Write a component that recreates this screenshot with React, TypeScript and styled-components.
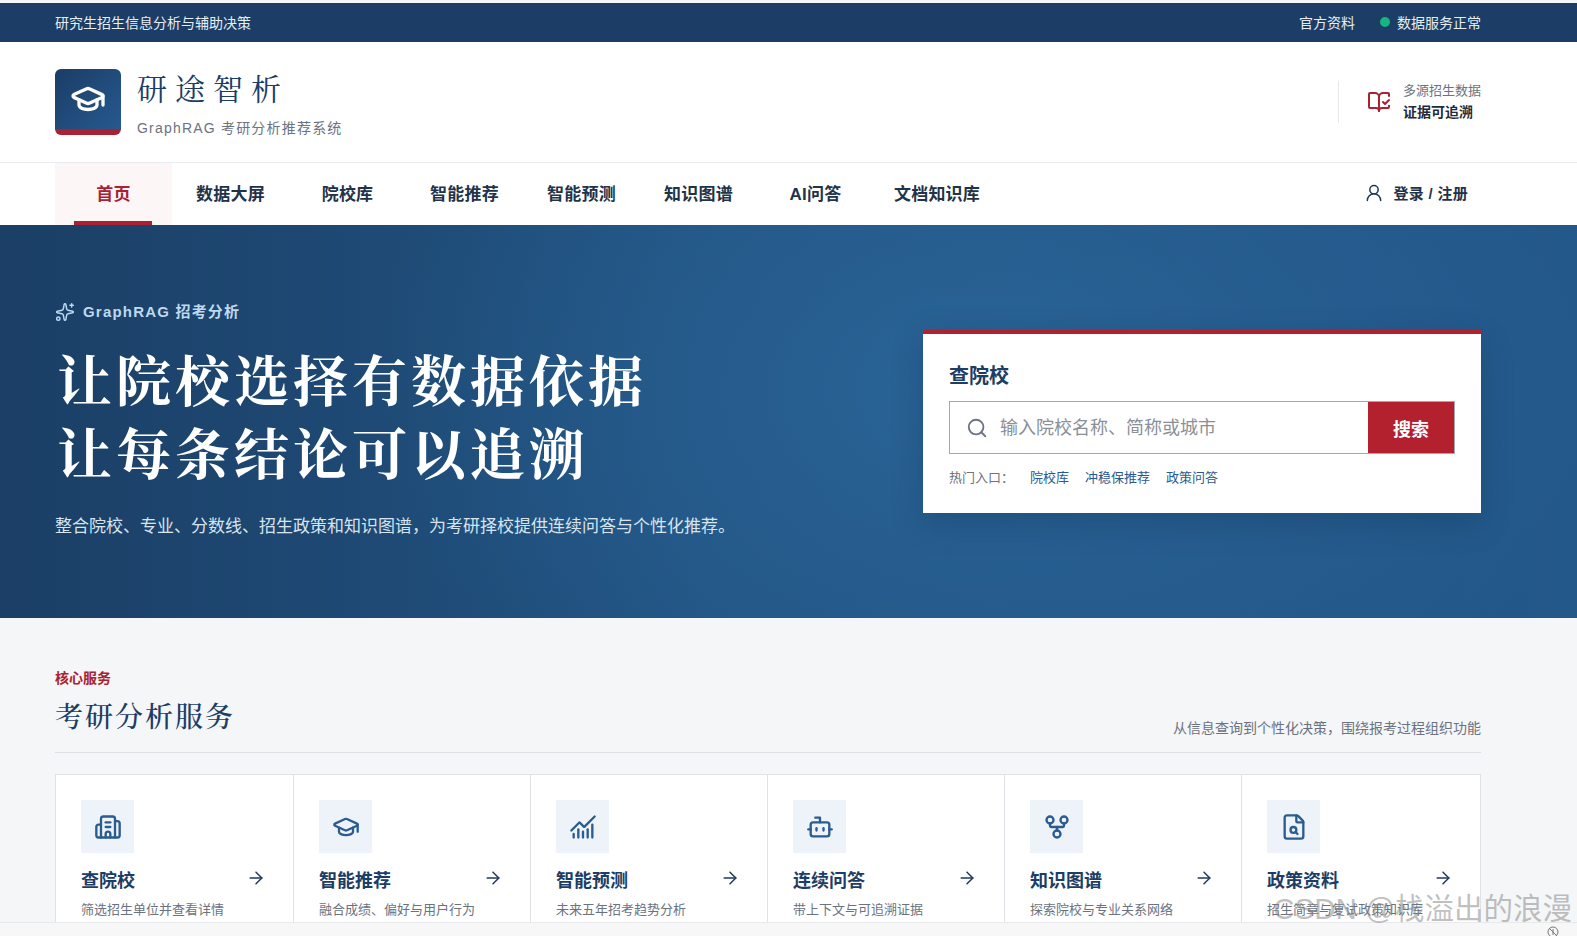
import React from 'react';
import styled, { createGlobalStyle } from 'styled-components';
import {
  ArrowRight,
  BookOpenCheck,
  Bot,
  Building2,
  ChartNoAxesCombined,
  FileSearch,
  GitFork,
  GraduationCap,
  Search,
  Sparkles,
  UserRound,
} from 'lucide-react';

const sans = '"Liberation Sans", "Noto Sans CJK SC", sans-serif';
const serif = '"Noto Serif CJK SC", "Liberation Serif", "Noto Sans CJK SC", serif';

const GlobalStyle = createGlobalStyle`
  html, body {
    margin: 0;
    padding: 0;
    height: 100%;
    overflow: hidden;
    background: #f7f7f7;
    font-family: ${sans};
  }
  * {
    box-sizing: border-box;
  }
`;

const NAV_ITEMS = ['首页', '数据大屏', '院校库', '智能推荐', '智能预测', '知识图谱', 'AI问答', '文档知识库'];

const SERVICES = [
  { icon: Building2, title: '查院校', desc: '筛选招生单位并查看详情' },
  { icon: GraduationCap, title: '智能推荐', desc: '融合成绩、偏好与用户行为' },
  { icon: ChartNoAxesCombined, title: '智能预测', desc: '未来五年招考趋势分析' },
  { icon: Bot, title: '连续问答', desc: '带上下文与可追溯证据' },
  { icon: GitFork, title: '知识图谱', desc: '探索院校与专业关系网络' },
  { icon: FileSearch, title: '政策资料', desc: '招生简章与复试政策知识库' },
];

const App = (): JSX.Element => {
  return (
    <Page>
      <GlobalStyle />
      <Viewport>
        <TopBar>
          <span>研究生招生信息分析与辅助决策</span>
          <TopBarRight>
            <span>官方资料</span>
            <Status>
              <StatusDot />
              数据服务正常
            </Status>
          </TopBarRight>
        </TopBar>

        <Header>
          <Brand>
            <LogoMark>
              <GraduationCap size={36} color="#fff" strokeWidth={2.2} />
            </LogoMark>
            <BrandText>
              <BrandName>研途智析</BrandName>
              <BrandSub>GraphRAG 考研分析推荐系统</BrandSub>
            </BrandText>
          </Brand>
          <HeaderNote>
            <BookOpenCheck size={24} color="#a92233" strokeWidth={2} />
            <NoteText>
              <NoteLight>多源招生数据</NoteLight>
              <NoteBold>证据可追溯</NoteBold>
            </NoteText>
          </HeaderNote>
        </Header>

        <Nav>
          <NavList>
            {NAV_ITEMS.map((item, i) => (
              <NavItem key={item} $active={i === 0}>
                {item}
              </NavItem>
            ))}
          </NavList>
          <Login>
            <LoginIcon size={20} color="#1f3a56" strokeWidth={1.8} />
            登录 / 注册
          </Login>
        </Nav>

        <Hero>
          <HeroCopy>
            <Eyebrow>
              <Sparkles size={20} color="#bcd9f0" strokeWidth={1.8} />
              GraphRAG 招考分析
            </Eyebrow>
            <Headline>
              让院校选择有数据依据
              <br />
              让每条结论可以追溯
            </Headline>
            <HeroText>整合院校、专业、分数线、招生政策和知识图谱，为考研择校提供连续问答与个性化推荐。</HeroText>
          </HeroCopy>
          <SearchCard>
            <SearchTitle>查院校</SearchTitle>
            <SearchRow>
              <SearchField>
                <Search size={22} color="#6b7484" strokeWidth={2} />
                <SearchInput placeholder="输入院校名称、简称或城市" />
              </SearchField>
              <SearchButton>搜索</SearchButton>
            </SearchRow>
            <HotLinks>
              <HotLabel>热门入口：</HotLabel>
              <HotLink>院校库</HotLink>
              <HotLink>冲稳保推荐</HotLink>
              <HotLink>政策问答</HotLink>
            </HotLinks>
          </SearchCard>
        </Hero>

        <Services>
          <Kicker>核心服务</Kicker>
          <SectionHead>
            <SectionTitle>考研分析服务</SectionTitle>
            <SectionNote>从信息查询到个性化决策，围绕报考过程组织功能</SectionNote>
          </SectionHead>
          <CardGrid>
            {SERVICES.map(({ icon: Icon, title, desc }) => (
              <ServiceCard key={title}>
                <IconBox>
                  <Icon size={28} color="#2a5c8f" strokeWidth={2} />
                </IconBox>
                <CardTitleRow>
                  <CardTitle>{title}</CardTitle>
                  <CardArrow size={20} color="#1f3a5c" strokeWidth={1.8} />
                </CardTitleRow>
                <CardDesc>{desc}</CardDesc>
              </ServiceCard>
            ))}
          </CardGrid>
        </Services>
      </Viewport>
      <BottomBand />
      <Watermark>CSDN @栈溢出的浪漫</Watermark>
      <CornerMark viewBox="0 0 14 14" fill="none" stroke="#777" strokeWidth="1">
        <circle cx="7" cy="7" r="5" />
        <path d="M3 3l8 8M7 4v6" />
      </CornerMark>
    </Page>
  );
};

export default App;

const Page = styled.div`
  position: relative;
  width: 1577px;
  height: 936px;
  display: flex;
  flex-direction: column;
  overflow: hidden;
  background: #f7f7f7;
`;

const Viewport = styled.div`
  flex: 1;
  min-height: 0;
  overflow: hidden;
  padding-top: 3px;
  background: #f4f6f8;
`;

const TopBar = styled.div`
  height: 39px;
  padding: 0 96px 2px 55px;
  display: flex;
  align-items: center;
  justify-content: space-between;
  background: #1b3d66;
  color: #e6edf5;
  font-size: 14px;
`;

const TopBarRight = styled.div`
  display: flex;
  align-items: center;
  gap: 25px;
`;

const Status = styled.span`
  display: flex;
  align-items: center;
  gap: 7px;
`;

const StatusDot = styled.i`
  width: 10px;
  height: 10px;
  border-radius: 50%;
  background: #17b57f;
`;

const Header = styled.header`
  height: 121px;
  padding: 0 96px 0 55px;
  display: flex;
  align-items: center;
  justify-content: space-between;
  background: #fff;
  border-bottom: 1px solid #e9ebee;
`;

const Brand = styled.div`
  display: flex;
  align-items: center;
  gap: 16px;
`;

const LogoMark = styled.div`
  width: 66px;
  height: 66px;
  display: flex;
  align-items: center;
  justify-content: center;
  border-radius: 6px;
  border-bottom: 6px solid #a92233;
  background: linear-gradient(135deg, #1b3d66, #26598f);
`;

const BrandText = styled.div`
  display: flex;
  flex-direction: column;
  gap: 13px;
`;

const BrandName = styled.div`
  font-family: ${serif};
  font-size: 30px;
  line-height: 38px;
  font-weight: 400;
  letter-spacing: 8px;
  color: #1b3d66;
`;

const BrandSub = styled.div`
  font-size: 14px;
  line-height: 18px;
  letter-spacing: 1.2px;
  color: #6b7280;
`;

const HeaderNote = styled.div`
  height: 42px;
  padding-left: 28px;
  display: flex;
  align-items: center;
  gap: 12px;
  border-left: 1px solid #e6e8eb;
`;

const NoteText = styled.div`
  display: flex;
  flex-direction: column;
  gap: 2px;
  margin-top: -1px;
`;

const NoteLight = styled.span`
  font-size: 13px;
  line-height: 18px;
  color: #6b7280;
`;

const NoteBold = styled.span`
  font-size: 14px;
  line-height: 20px;
  font-weight: 700;
  color: #1f2d3d;
`;

const Nav = styled.nav`
  height: 62px;
  padding: 0 109px 0 55px;
  display: flex;
  align-items: stretch;
  justify-content: space-between;
  background: #fff;
`;

const NavList = styled.div`
  display: flex;
  align-items: stretch;
`;

const NavItem = styled.a<{ $active?: boolean }>`
  position: relative;
  min-width: 117px;
  padding: 0 20px 4px;
  display: flex;
  align-items: center;
  justify-content: center;
  font-size: 17px;
  font-weight: 700;
  letter-spacing: 0.2px;
  color: ${({ $active }) => ($active ? '#a92233' : '#1f3349')};
  background: ${({ $active }) => ($active ? '#fdf6f6' : 'transparent')};

  &::after {
    content: '';
    display: ${({ $active }) => ($active ? 'block' : 'none')};
    position: absolute;
    left: 19px;
    right: 20px;
    bottom: 0;
    height: 4px;
    background: #a92233;
  }
`;

const Login = styled.a`
  padding-bottom: 4px;
  display: flex;
  align-items: center;
  gap: 9px;
  font-size: 15px;
  font-weight: 700;
  letter-spacing: 0.3px;
  color: #1f3349;
`;

const LoginIcon = styled(UserRound)`
  margin-top: 2px;
`;

const Hero = styled.section`
  height: 393px;
  padding: 0 96px 0 55px;
  display: flex;
  align-items: center;
  justify-content: space-between;
  background:
    radial-gradient(ellipse 620px 420px at 62% 42%, rgba(48, 112, 165, 0.55), transparent 100%),
    linear-gradient(90deg, #1b3f66 0%, #215382 45%, #23588a 100%);
`;

const HeroCopy = styled.div`
  display: flex;
  flex-direction: column;
  margin-top: -1px;
`;

const Eyebrow = styled.div`
  display: flex;
  align-items: center;
  gap: 8px;
  font-size: 15px;
  line-height: 20px;
  font-weight: 700;
  letter-spacing: 1.2px;
  color: #bcd9f0;
`;

const Headline = styled.h1`
  margin: 19px 0 0 2px;
  font-family: ${serif};
  font-size: 55px;
  line-height: 73px;
  font-weight: 700;
  letter-spacing: 4px;
  color: #fff;
`;

const HeroText = styled.p`
  margin: 27px 0 0;
  font-size: 17px;
  line-height: 26px;
  color: #d7e4ef;
`;

const SearchCard = styled.div`
  width: 558px;
  height: 183px;
  padding: 28px 26px 0;
  background: #fff;
  border-top: 4px solid #b3212f;
  box-shadow: 0 10px 30px rgba(10, 30, 60, 0.22);
`;

const SearchTitle = styled.div`
  font-size: 20px;
  line-height: 28px;
  font-weight: 700;
  color: #1b3d66;
`;

const SearchRow = styled.div`
  margin-top: 11px;
  height: 53px;
  display: flex;
  border: 1px solid #a3a8b0;
`;

const SearchField = styled.div`
  flex: 1;
  padding-left: 16px;
  display: flex;
  align-items: center;
  gap: 10px;
`;

const SearchInput = styled.input`
  flex: 1;
  padding-top: 3px;
  border: 0;
  outline: 0;
  font-family: ${sans};
  font-size: 18px;
  color: #1f2d3d;

  &::placeholder {
    color: #8a8f98;
    opacity: 1;
  }
`;

const SearchButton = styled.button`
  width: 86px;
  border: 0;
  background: #b3212f;
  color: #fff;
  font-family: ${sans};
  font-size: 18px;
  font-weight: 700;
`;

const HotLinks = styled.div`
  margin-top: 15px;
  display: flex;
  align-items: center;
  gap: 16px;
  font-size: 13px;
  line-height: 18px;
`;

const HotLabel = styled.span`
  color: #6b7280;
`;

const HotLink = styled.a`
  color: #26598f;
`;

const Services = styled.section`
  padding: 50px 96px 0 55px;
`;

const Kicker = styled.div`
  font-size: 14px;
  line-height: 20px;
  font-weight: 700;
  color: #a92233;
`;

const SectionHead = styled.div`
  height: 65px;
  padding-bottom: 14px;
  display: flex;
  align-items: flex-end;
  justify-content: space-between;
  border-bottom: 1px solid #dde1e6;
`;

const SectionTitle = styled.h2`
  margin: 0 0 5px;
  font-family: ${serif};
  font-size: 28px;
  line-height: 36px;
  font-weight: 500;
  letter-spacing: 2px;
  color: #1b3d66;
`;

const SectionNote = styled.span`
  font-size: 14px;
  line-height: 20px;
  color: #6b7280;
`;

const CardGrid = styled.div`
  margin-top: 21px;
  display: grid;
  grid-template-columns: repeat(5, 237px) 1fr;
  background: #fff;
  border: 1px solid #dfe3e8;
`;

const ServiceCard = styled.div`
  height: 170px;
  padding: 25px 25px 0;
  border-left: 1px solid #dfe3e8;

  &:first-child {
    border-left: 0;
  }
`;

const IconBox = styled.div`
  width: 53px;
  height: 53px;
  display: flex;
  align-items: center;
  justify-content: center;
  background: #eef3f9;
`;

const CardTitleRow = styled.div`
  margin-top: 15px;
  padding-right: 2px;
  display: flex;
  align-items: center;
  justify-content: space-between;
`;

const CardArrow = styled(ArrowRight)`
  margin-bottom: 6px;
`;

const CardTitle = styled.h3`
  margin: 0;
  font-size: 18px;
  line-height: 26px;
  font-weight: 700;
  color: #1b3d66;
`;

const CardDesc = styled.p`
  margin: 7px 0 0;
  font-size: 13px;
  line-height: 18px;
  color: #6b7280;
`;

const BottomBand = styled.div`
  height: 14px;
  flex: none;
  background: #f7f7f7;
  border-top: 1px solid #e8e9eb;
`;

const Watermark = styled.div`
  position: absolute;
  right: 5px;
  top: 889px;
  font-size: 29.5px;
  line-height: 40px;
  white-space: nowrap;
  color: rgba(130, 130, 130, 0.5);
  pointer-events: none;
`;

const CornerMark = styled.svg`
  position: absolute;
  left: 1546px;
  bottom: -3px;
  width: 14px;
  height: 14px;
`;
